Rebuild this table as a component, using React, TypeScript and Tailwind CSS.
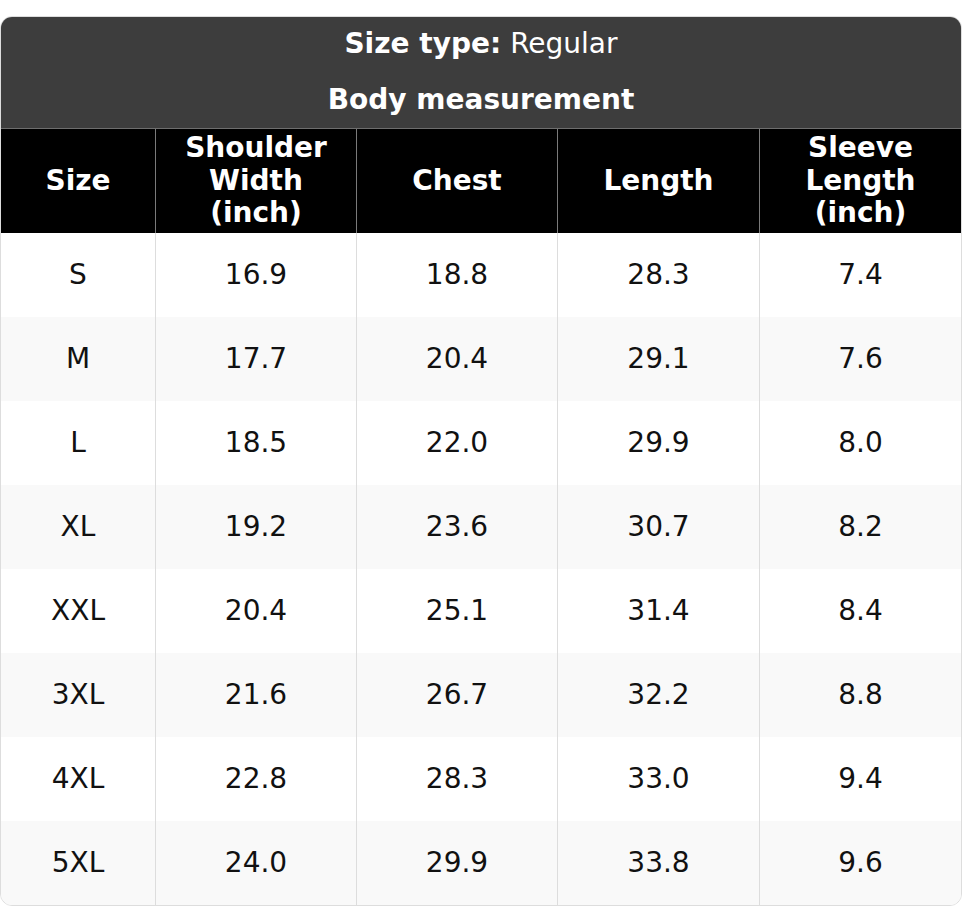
const headers = [
  ["Size"],
  ["Shoulder", "Width", "(inch)"],
  ["Chest"],
  ["Length"],
  ["Sleeve", "Length", "(inch)"],
];

const rows = [
  ["S", "16.9", "18.8", "28.3", "7.4"],
  ["M", "17.7", "20.4", "29.1", "7.6"],
  ["L", "18.5", "22.0", "29.9", "8.0"],
  ["XL", "19.2", "23.6", "30.7", "8.2"],
  ["XXL", "20.4", "25.1", "31.4", "8.4"],
  ["3XL", "21.6", "26.7", "32.2", "8.8"],
  ["4XL", "22.8", "28.3", "33.0", "9.4"],
  ["5XL", "24.0", "29.9", "33.8", "9.6"],
];

export default function App() {
  return (
    <div className="w-[962px] bg-white pt-4" style={{ fontFamily: '"DejaVu Sans", sans-serif' }}>
      <div className="overflow-hidden rounded-xl border border-[#dddddd]">
        <div className="bg-[#3d3d3d] text-white text-[28px]">
          <div className="flex h-[54px] items-center justify-center">
            <span className="font-bold">Size type:</span>
            <span className="ml-[9px]">Regular</span>
          </div>
          <div className="flex h-[57px] items-center justify-center font-bold">Body measurement</div>
        </div>
        <div className="grid grid-cols-[154px_201px_201px_202px_1fr] border-t border-[#6e6e6e] bg-black text-white text-[28px] font-bold leading-[32.5px]">
          {headers.map((h, i) => (
            <div
              key={i}
              className={`flex h-[104px] flex-col items-center justify-center text-center ${i > 0 ? "border-l border-[#7a7a7a]" : ""}`}
            >
              {h.map((line) => (
                <span key={line}>{line}</span>
              ))}
            </div>
          ))}
        </div>
        {rows.map((r, ri) => (
          <div
            key={r[0]}
            className={`grid grid-cols-[154px_201px_201px_202px_1fr] text-[28px] text-[#111111] ${ri % 2 === 1 ? "bg-[#f9f9f9]" : "bg-white"}`}
          >
            {r.map((c, ci) => (
              <div
                key={ci}
                className={`flex h-[84px] items-center justify-center ${ci > 0 ? "border-l border-[#dddddd]" : ""}`}
              >
                {c}
              </div>
            ))}
          </div>
        ))}
      </div>
    </div>
  );
}
